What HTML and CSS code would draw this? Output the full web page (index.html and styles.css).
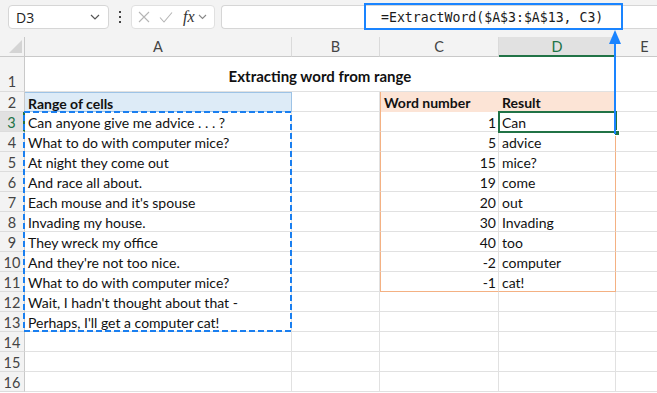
FILE: index.html
```html
<!DOCTYPE html>
<html lang="en">
<head>
  <meta charset="UTF-8">
  <title>Extracting word from range</title>
  <link rel="stylesheet" href="styles.css">
</head>
<body>
  <!-- Formula bar -->
  <div class="topbar">
    <div class="namebox">
      <span>D3</span>
      <svg class="chev" width="10" height="6" viewBox="0 0 10 6"><path d="M1 1l4 4 4-4" fill="none" stroke="#555" stroke-width="1.2"/></svg>
    </div>
    <div class="dots"><i></i><i></i><i></i></div>
    <div class="fnbox">
      <svg width="12" height="12" viewBox="0 0 12 12"><path d="M1 1l10 10M11 1L1 11" stroke="#b5b5b5" stroke-width="1.1"/></svg>
      <svg width="14" height="11" viewBox="0 0 14 11"><path d="M1 5.5l4 4.5 8-9.5" fill="none" stroke="#b5b5b5" stroke-width="1.1"/></svg>
      <span class="fx">fx</span>
      <svg width="9" height="6" viewBox="0 0 9 6"><path d="M1 1l3.5 3.5L8 1" fill="none" stroke="#888" stroke-width="1.1"/></svg>
    </div>
    <div class="formula">
      <span class="formula-text">=ExtractWord($A$3:$A$13, C3)</span>
    </div>
  </div>

  <!-- Sheet -->
  <div class="sheet">
    <div class="corner"><span class="tri"></span></div>
    <div class="ch">A</div>
    <div class="ch">B</div>
    <div class="ch">C</div>
    <div class="ch ch-sel">D</div>
    <div class="ch">E</div>

    <div class="rh rh-tall">1</div>
    <div class="cell title">Extracting word from range</div>
    <div class="cell tall"></div>

    <div class="rh">2</div>
    <div class="cell head-a">Range of cells</div>
    <div class="cell"></div>
    <div class="cell head-c">Word number</div>
    <div class="cell head-d">Result</div>
    <div class="cell"></div>

    <div class="rh rh-sel">3</div>
    <div class="cell">Can anyone give me advice . . . ?</div>
    <div class="cell"></div>
    <div class="cell num tb">1</div>
    <div class="cell tb-r">Can</div>
    <div class="cell"></div>

    <div class="rh">4</div>
    <div class="cell">What to do with computer mice?</div>
    <div class="cell"></div>
    <div class="cell num tb">5</div>
    <div class="cell tb-r">advice</div>
    <div class="cell"></div>

    <div class="rh">5</div>
    <div class="cell">At night they come out</div>
    <div class="cell"></div>
    <div class="cell num tb">15</div>
    <div class="cell tb-r">mice?</div>
    <div class="cell"></div>

    <div class="rh">6</div>
    <div class="cell">And race all about.</div>
    <div class="cell"></div>
    <div class="cell num tb">19</div>
    <div class="cell tb-r">come</div>
    <div class="cell"></div>

    <div class="rh">7</div>
    <div class="cell">Each mouse and it's spouse</div>
    <div class="cell"></div>
    <div class="cell num tb">20</div>
    <div class="cell tb-r">out</div>
    <div class="cell"></div>

    <div class="rh">8</div>
    <div class="cell">Invading my house.</div>
    <div class="cell"></div>
    <div class="cell num tb">30</div>
    <div class="cell tb-r">Invading</div>
    <div class="cell"></div>

    <div class="rh">9</div>
    <div class="cell">They wreck my office</div>
    <div class="cell"></div>
    <div class="cell num tb">40</div>
    <div class="cell tb-r">too</div>
    <div class="cell"></div>

    <div class="rh">10</div>
    <div class="cell">And they're not too nice.</div>
    <div class="cell"></div>
    <div class="cell num tb">-2</div>
    <div class="cell tb-r">computer</div>
    <div class="cell"></div>

    <div class="rh">11</div>
    <div class="cell">What to do with computer mice?</div>
    <div class="cell"></div>
    <div class="cell num tb tb-last">-1</div>
    <div class="cell tb-r tb-last">cat!</div>
    <div class="cell"></div>

    <div class="rh">12</div>
    <div class="cell">Wait, I hadn't thought about that -</div>
    <div class="cell"></div>
    <div class="cell"></div>
    <div class="cell"></div>
    <div class="cell"></div>

    <div class="rh">13</div>
    <div class="cell">Perhaps, I'll get a computer cat!</div>
    <div class="cell"></div>
    <div class="cell"></div>
    <div class="cell"></div>
    <div class="cell"></div>

    <div class="rh">14</div>
    <div class="cell"></div>
    <div class="cell"></div>
    <div class="cell"></div>
    <div class="cell"></div>
    <div class="cell"></div>

    <div class="rh">15</div>
    <div class="cell"></div>
    <div class="cell"></div>
    <div class="cell"></div>
    <div class="cell"></div>
    <div class="cell"></div>

    <div class="rh">16</div>
    <div class="cell"></div>
    <div class="cell"></div>
    <div class="cell"></div>
    <div class="cell"></div>
    <div class="cell"></div>

    <!-- overlays -->
    <svg class="ants" width="270" height="222" viewBox="0 0 270 222">
      <rect x="1" y="1" width="267" height="219" fill="none" stroke="#1a7ff0" stroke-width="2" stroke-dasharray="6 3"/>
    </svg>
    <div class="selection"><span class="handle"></span></div>
  </div>

  <!-- formula callout -->
  <div class="callout"></div>
  <svg class="arrow" width="14" height="104" viewBox="0 0 14 104">
    <path d="M7 0L1 14h12z" fill="#1a84ff"/>
    <path d="M7 10v94" stroke="#1a84ff" stroke-width="2"/>
  </svg>
</body>
</html>
```

FILE: styles.css
```css
* {
  margin: 0;
  padding: 0;
  box-sizing: border-box;
}
body {
  width: 657px;
  height: 393px;
  overflow: hidden;
  background: #fff;
  font-family: Lato, "Open Sans", sans-serif;
  color: #111;
  position: relative;
}
/* Formula bar */
.topbar {
  height: 37px;
  background: #f3f3f3;
  display: flex;
  align-items: flex-start;
  padding: 5px 0 0 8px;
}
.namebox {
  width: 101px;
  height: 24px;
  background: #fff;
  border: 1px solid #d6d6d6;
  border-radius: 4px;
  display: flex;
  align-items: center;
  justify-content: space-between;
  padding: 0 8px 0 7px;
  font-family: "Open Sans", sans-serif;
  font-size: 14px;
  color: #222;
}
.dots {
  width: 22px;
  height: 24px;
  display: flex;
  flex-direction: column;
  align-items: center;
  justify-content: center;
  gap: 3px;
}
.dots i {
  width: 2px;
  height: 2px;
  background: #444;
}
.fnbox {
  width: 84px;
  height: 24px;
  background: #fff;
  border: 1px solid #e0e0e0;
  border-radius: 4px;
  display: flex;
  align-items: center;
  padding: 0 3px 0 6px;
  gap: 9px;
}
.fnbox .fx {
  font-family: "Liberation Serif", serif;
  font-style: italic;
  font-size: 16px;
  color: #333;
  margin-right: -6px;
  margin-left: 1px;
}
.formula {
  flex: 1;
  height: 24px;
  margin-left: 6px;
  background: #fff;
  border: 1px solid #d6d6d6;
  border-right: none;
  border-radius: 4px 0 0 4px;
  display: flex;
  align-items: center;
  padding-left: 159px;
}
.formula-text {
  font-family: "DejaVu Sans Mono", monospace;
  font-size: 13.2px;
  color: #1a1a1a;
}
.callout {
  position: absolute;
  left: 364px;
  top: 3px;
  width: 259px;
  height: 27px;
  border: 2px solid #1a84ff;
}
.arrow {
  position: absolute;
  left: 608px;
  top: 30px;
}
/* Sheet */
.sheet {
  position: relative;
  display: grid;
  grid-template-columns: 25px 267px 88px 119px 117px 58px;
  grid-template-rows: 20px 35px repeat(15, 20px);
  font-size: 14px;
}
.corner {
  background: #f3f3f3;
  border-right: 1px solid #c9c9c9;
  border-bottom: 1px solid #c9c9c9;
  position: relative;
}
.corner .tri {
  position: absolute;
  right: 2px;
  bottom: 3px;
  width: 0;
  height: 0;
  border-left: 13px solid transparent;
  border-bottom: 13px solid #d4d4d4;
}
.ch {
  background: #f3f3f3;
  border-right: 1px solid #dadada;
  border-bottom: 1px solid #c9c9c9;
  text-align: center;
  font-size: 14.5px;
  line-height: 20px;
  color: #444;
}
.ch-sel {
  background: #e1e1e1;
  color: #217346;
  border-bottom: 2px solid #217346;
}
.rh {
  background: #f3f3f3;
  border-right: 1px solid #c9c9c9;
  border-bottom: 1px solid #dcdcdc;
  text-align: center;
  font-size: 14.5px;
  line-height: 18px;
  padding-top: 2px;
  color: #444;
}
.rh-tall {
  display: flex;
  align-items: flex-end;
  justify-content: center;
}
.rh-sel {
  background: #e1e1e1;
  color: #217346;
  border-right: 2px solid #217346;
}
.cell {
  border-right: 1px solid #e1e1e1;
  border-bottom: 1px solid #e1e1e1;
  padding: 2px 3px 0;
  line-height: 18px;
  white-space: nowrap;
  overflow: visible;
}
.title {
  grid-column: span 4;
  font-weight: bold;
  font-size: 15px;
  text-align: center;
  display: flex;
  align-items: flex-end;
  justify-content: center;
  padding-bottom: 6px;
}
.head-a {
  background: #ddebf7;
  border: 1px solid #9dc3e6;
  border-left: none;
  font-weight: bold;
}
.head-c {
  background: #fce4d6;
  border-left: 1px solid #f4b183;
  border-right: none;
  border-bottom: none;
  font-weight: bold;
}
.head-d {
  background: #fce4d6;
  border-right: 1px solid #f4b183;
  border-bottom: none;
  font-weight: bold;
}
.num {
  text-align: right;
  padding-right: 2px;
}
.tb {
  border-left: 1px solid #f4b183;
}
.tb-r {
  border-right: 1px solid #f4b183;
}
.tb-last {
  border-bottom: 1px solid #f4b183;
}
/* overlays */
.ants {
  position: absolute;
  left: 23px;
  top: 74px;
}
.selection {
  position: absolute;
  left: 498px;
  top: 74px;
  width: 119px;
  height: 22px;
  border: 2px solid #217346;
}
.selection .handle {
  position: absolute;
  right: -5px;
  bottom: -5px;
  width: 6px;
  height: 6px;
  background: #217346;
  border: 1px solid #fff;
}
```
